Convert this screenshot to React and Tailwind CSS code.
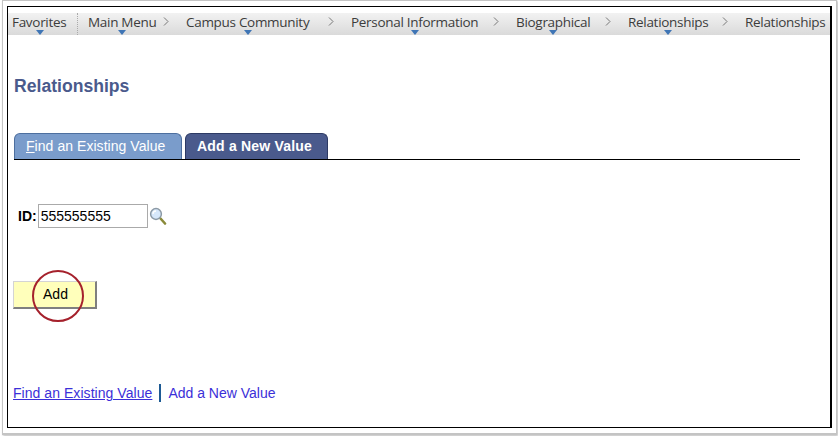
import React from 'react';

const crumbs = [
  { label: 'Main Menu', w: 'w-[98px]', arrow: true },
  { label: 'Campus Community', w: 'w-[165px]', arrow: true },
  { label: 'Personal Information', w: 'w-[165px]', arrow: true },
  { label: 'Biographical', w: 'w-[112px]', arrow: true },
  { label: 'Relationships', w: 'w-[117px]', arrow: true },
  { label: 'Relationships', w: 'w-[85px]', arrow: false, last: true },
];

function Arrow() {
  return <span className="absolute left-1/2 bottom-0 -ml-1 h-0 w-0 border-x-4 border-t-[5px] border-x-transparent border-t-[#3f75b5]" />;
}

function Chevron() {
  return (
    <svg width="6" height="9" viewBox="0 0 6 9" className="mt-[4px] mr-[7px] shrink-0">
      <path d="M1 0.5L5 4.5L1 8.5" fill="none" stroke="#777" strokeWidth="1" />
    </svg>
  );
}

function SearchIcon() {
  return (
    <svg width="18" height="18" viewBox="0 0 18 18" className="ml-[1px]">
      <path d="M11.5 11.5L16 16.5" stroke="#8a8a3a" strokeWidth="2.6" strokeLinecap="round" />
      <circle cx="7" cy="7" r="5.4" fill="#d6e8fb" stroke="#8c9aa6" strokeWidth="1.5" />
      <path d="M4 7a3 3 0 0 1 3-3" stroke="#fff" strokeWidth="1.3" fill="none" />
    </svg>
  );
}

export default function App() {
  return (
    <div className="h-[436px] w-[838px] overflow-hidden bg-white pl-[2px] font-['Liberation_Sans',Arial,sans-serif]">
      <div className="h-[435px] w-[835px] border border-b-2 border-[#c4c4c4] px-1 pt-[5px] shadow-[1px_1px_2px_#bbb]">
        <div className="h-[422px] w-[825px] border border-r-2 border-black bg-white pt-[6px]">
          <nav className="flex h-[22px] items-stretch bg-gradient-to-b from-[#f2f2f2] to-[#dadada] font-['Open_Sans',sans-serif] text-[13.5px] leading-[18px] tracking-[-0.3px] text-[#3c3c3c]">
            <div className="relative w-[70px] border-r border-dotted border-[#aaa] pl-[4px]">
              Favorites
              <span className="absolute left-[28px] bottom-0 h-0 w-0 border-x-4 border-t-[5px] border-x-transparent border-t-[#3f75b5]" />
            </div>
            {crumbs.map((c, i) => (
              <div key={i} className={`relative flex shrink-0 justify-between pl-[10px] ${c.w}`}>
                <span className="relative whitespace-nowrap">
                  {c.label}
                  {c.arrow && <Arrow />}
                </span>
                {!c.last && <Chevron />}
              </div>
            ))}
          </nav>

          <h1 className="mt-[39px] ml-[6px] text-[17.6px] leading-[24px] font-bold text-[#4a5a8c]">Relationships</h1>

          <div className="mt-[35px] ml-[6px] flex h-[27px] w-[786px] items-end gap-[3px] border-b border-black text-[14px]">
            <div className="flex h-[26px] w-[168px] items-center rounded-t-[6px] border border-b-0 border-[#4d6f9f] bg-[#7a9ccb] pl-[11px] tracking-[0.05px] text-white">
              <span><span className="underline">F</span>ind an Existing Value</span>
            </div>
            <div className="flex h-[26px] w-[143px] items-center rounded-t-[6px] border border-b-0 border-[#2d3a64] bg-[#4a5a8c] pl-[11px] font-bold tracking-[0.2px] text-white">
              Add a New Value
            </div>
          </div>

          <div className="mt-[44px] ml-[10px] flex items-center text-[14px]">
            <span className="mr-[1px] font-bold text-black">ID:</span>
            <div className="h-[24px] w-[110px] border border-[#aaa] pl-[2px] text-[14px] leading-[22px] text-black">555555555</div>
            <SearchIcon />
          </div>

          <div className="relative mt-[53px] ml-[5px] h-[28px] w-[84px] border border-r-2 border-b-2 border-t-[#d4d4d4] border-r-[#7f7f7f] border-b-[#7f7f7f] border-l-[#d4d4d4] bg-[#ffffbb] pl-[2px] text-center text-[14px] leading-[25px] text-black">
            Add
            <span className="absolute left-[18px] -top-[12px] h-[52px] w-[52px] rounded-full border-2 border-[#a5212c]" />
          </div>

          <div className="mt-[75px] ml-[5px] flex items-center text-[14px] leading-[18px] text-[#3b2fd8]">
            <span className="tracking-[0.05px] underline">Find an Existing Value</span>
            <span className="mr-[7px] ml-[7px] h-[18px] w-[2px] bg-[#1d5a94]" />
            <span>Add a New Value</span>
          </div>
        </div>
      </div>
    </div>
  );
}
